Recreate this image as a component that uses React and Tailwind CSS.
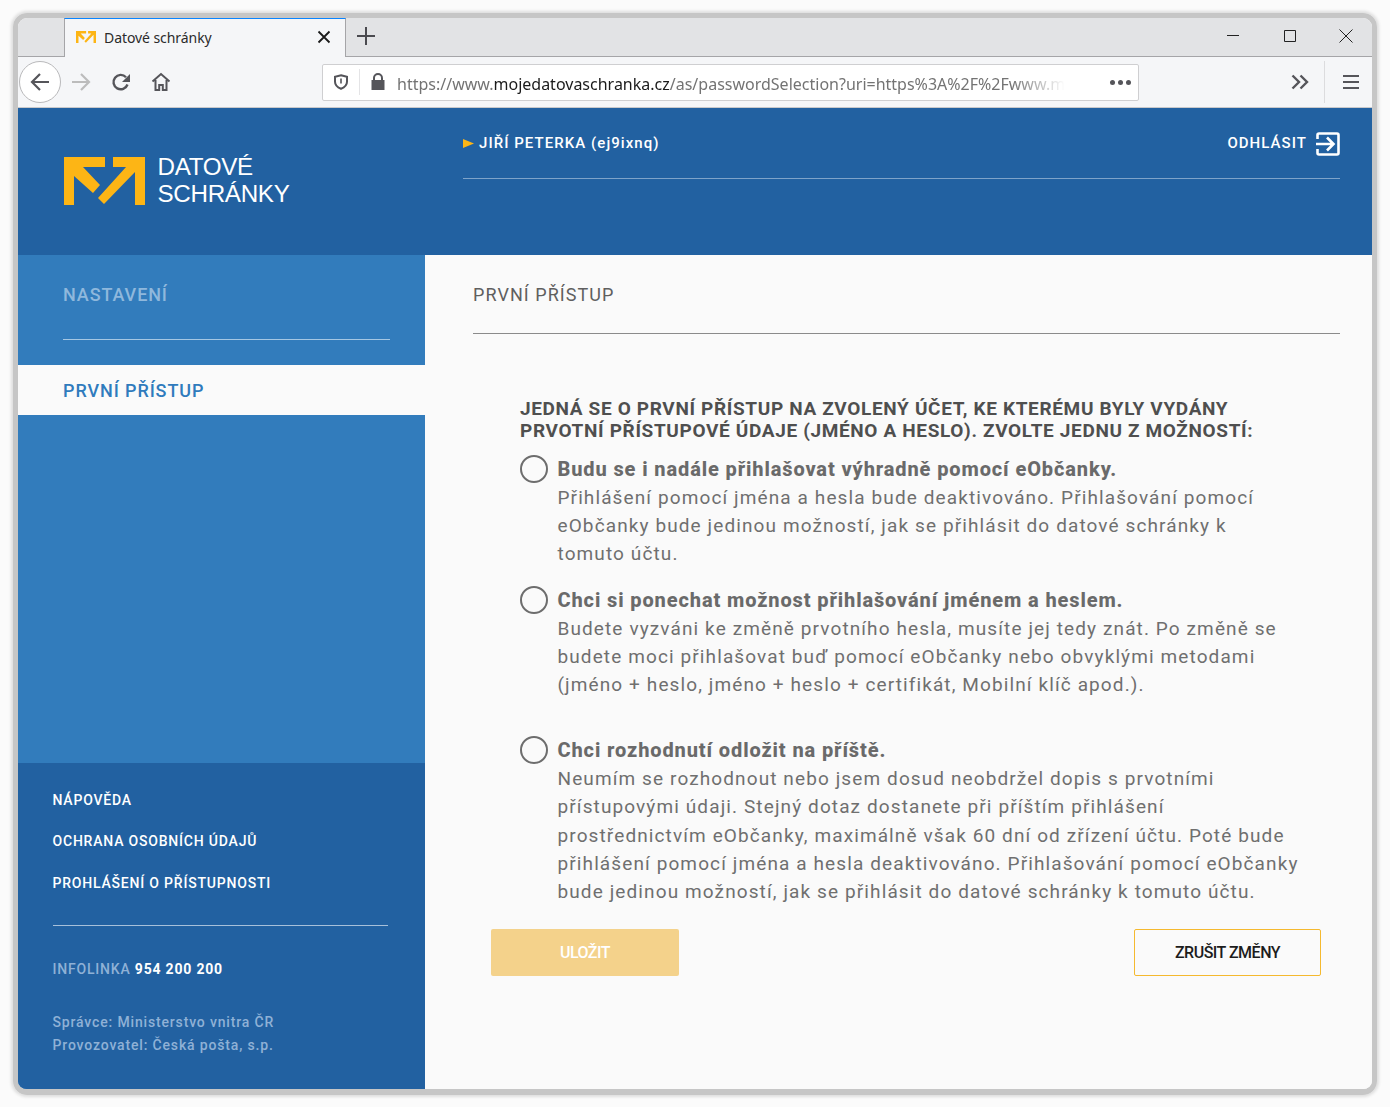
const Logo = ({ className }) => (
  <svg viewBox="0 0 81 48" className={className}>
    <path fill="#fdb515" d="M0 0H41V10H19L36 28L29 36L10 19V48H0Z" />
    <path fill="#fdb515" d="M49 0H81V48H71V15L40 47L34 41L62 10H49Z" />
  </svg>
);

const Option = ({ title, children, className = "" }) => (
  <div className={`flex ${className}`}>
    <div className="w-[28px] h-[28px] rounded-full border-2 border-[#6d6d6d] bg-[#fafafa] shrink-0" />
    <div className="ml-[10px] -translate-x-[0.5px]">
      <div className="text-[20px] leading-[29px] font-extrabold text-[#6a6a6a] tracking-[0.88px]">{title}</div>
      <div className="text-[19px] leading-[28.2px] text-[#6f6f6f] tracking-[1.11px]">{children}</div>
    </div>
  </div>
);

export default function App() {
  return (
    <div className="w-[1390px] h-[1107px] bg-[#fbfbfb] overflow-hidden pt-[13px] pl-[13px] font-['Roboto',sans-serif]">
      <div className="w-[1364px] h-[1082px] border-[5px] border-b-[6px] border-[#c6c6c6] rounded-[14px] overflow-hidden shadow-[0_0_3px_2px_#dedede] flex flex-col">
        {/* tab strip */}
        <div className="h-[39px] bg-[#e2e3e5] border-b border-[#a5a5a8] flex shrink-0">
          <div className="w-[46px]" />
          <div className="w-[282px] h-[39px] bg-[#f5f6f8] border-t border-t-[#0a84ff] border-x border-x-[#a5a5a8] flex items-center pl-[11px] pr-[14px] pb-[2px]">
            <Logo className="w-[20px] h-[12px] mr-[8px]" />
            <span className="text-[14px] text-[#2b2b2b] font-['Noto_Sans',sans-serif] tracking-[-0.07px]">Datové schránky</span>
            <svg viewBox="0 0 14 14" className="w-[14px] h-[14px] ml-auto" fill="none" stroke="#1a1a1a" strokeWidth="1.8"><path d="M1.500 1.500l11 11M12.500 1.500l-11 11" /></svg>
          </div>
          <div className="w-[40px] flex items-center justify-center pb-[2px]">
            <svg viewBox="0 0 18 18" className="w-[18px] h-[18px]" fill="none" stroke="#4a4a4f" strokeWidth="2"><path d="M9 0v18M0 9h18" /></svg>
          </div>
          <div className="ml-auto flex items-center text-[#222] pr-[19px] pb-[2px]">
            <svg viewBox="0 0 12 12" className="w-[12px] h-[12px]" fill="none" stroke="#222" strokeWidth="1"><path d="M0 5.500h12" /></svg>
            <svg viewBox="0 0 12 12" className="w-[12px] h-[12px] ml-[45px]" fill="none" stroke="#222" strokeWidth="1"><path d="M.5.5h11v11H.5z" /></svg>
            <svg viewBox="0 0 14 14" className="w-[14px] h-[14px] ml-[43px]" fill="none" stroke="#222" strokeWidth="1"><path d="M.5.5l13 13M13.500.5l-13 13" /></svg>
          </div>
        </div>
        {/* toolbar */}
        <div className="h-[51px] bg-[#f5f6f8] border-b border-[#c9c9cb] flex items-center shrink-0 relative">
          <div className="w-[42px] h-[42px] ml-[1px] rounded-full bg-white border border-[#b9b9bb] flex items-center justify-center">
            <svg viewBox="0 0 20 20" className="w-[20px] h-[20px]" fill="none" stroke="#55555a" strokeWidth="2.2"><path d="M19 10H2M10 2l-8 8 8 8" /></svg>
          </div>
          <svg viewBox="0 0 20 20" className="w-[20px] h-[20px] ml-[10px]" fill="none" stroke="#bcbcbc" strokeWidth="2.2"><path d="M1 10h17M10 2l8 8-8 8" /></svg>
          <svg viewBox="0 0 20 20" className="w-[20px] h-[20px] ml-[20px]" fill="none" stroke="#55555a" strokeWidth="2.4"><path d="M16.500 12.500A7.200 7.200 0 1 1 15 5.200" /><path fill="#55555a" stroke="none" d="M19 2v8h-8z" /></svg>
          <svg viewBox="0 0 20 20" className="w-[20px] h-[20px] ml-[20px]" fill="none" stroke="#55555a" strokeWidth="2"><path d="M1.500 9.500L10 2l8.500 7.500M4.500 8v10h3.700v-5h3.600v5h3.700V8" /></svg>
          <div className="w-[817px] h-[37px] ml-[151px] bg-white rounded-[2px] border border-[#cfcfd1] flex items-center pr-[6px] shrink-0">
            <svg viewBox="0 0 16 16" className="w-[16px] h-[16px] ml-[10px]" fill="none" stroke="#55555a" strokeWidth="2"><path d="M8 1.200l6 1.600v5c0 3.400-2.500 5.600-6 7-3.500-1.400-6-3.600-6-7v-5z" /><path d="M8 4.500v5" strokeWidth="1.6" /></svg>
            <div className="w-px h-[26px] bg-[#e4e4e6] ml-[10px]" />
            <svg viewBox="0 0 16 18" className="w-[16px] h-[18px] ml-[10px]" fill="#55555a"><path d="M3 7V5a5 5 0 0 1 10 0v2h1.500v10h-13V7zm2 0h6V5a3 3 0 0 0-6 0z" /></svg>
            <div className="ml-[11px] w-[668px] overflow-hidden whitespace-nowrap text-[16px] pt-[3px] text-[#737373] font-['Noto_Sans',sans-serif] [mask-image:linear-gradient(to_right,black_92%,transparent)]">
              https://www.<span className="text-[#1b1b1b]">mojedatovaschranka.cz</span>/as/passwordSelection?uri=https%3A%2F%2Fwww.m
            </div>
            <div className="ml-auto flex gap-[3px] mr-[1px]">
              <span className="w-[5px] h-[5px] rounded-full bg-[#55555a]" />
              <span className="w-[5px] h-[5px] rounded-full bg-[#55555a]" />
              <span className="w-[5px] h-[5px] rounded-full bg-[#55555a]" />
            </div>
          </div>
          <svg viewBox="0 0 18 16" className="w-[18px] h-[16px] ml-[152px]" fill="none" stroke="#55555a" strokeWidth="2.4"><path d="M1.500 1.500L8 8l-6.500 6.500M9.500 1.500L16 8l-6.500 6.500" /></svg>
          <div className="w-px h-[42px] bg-[#dcdcde] ml-[15px]" />
          <svg viewBox="0 0 16 16" className="w-[16px] h-[16px] ml-[18px]" fill="none" stroke="#55555a" strokeWidth="2"><path d="M0 2h16M0 8h16M0 14h16" /></svg>
        </div>
        {/* header */}
        <div className="h-[147px] bg-[#2261a1] flex shrink-0">
          <div className="w-[445px] pl-[46px] pt-[49px] flex shrink-0">
            <Logo className="w-[81px] h-[48px]" />
            <div className="ml-[12.500px] -mt-[3px] text-white text-[24.2px] leading-[26.5px] font-['Liberation_Sans',sans-serif] -tracking-[0.3px]">DATOVÉ<br />SCHRÁNKY</div>
          </div>
          <div className="w-[877px] h-[71px] border-b border-[#7ea3c9] flex items-center pt-[1px] text-white font-medium text-[15px] tracking-[1.05px]">
            <svg viewBox="0 0 11 9" className="w-[11px] h-[9px] mr-[5px]"><path fill="#fdb515" d="M0 0l11 4.500L0 9z" /></svg>
            <span>JIŘÍ PETERKA (ej9ixnq)</span>
            <span className="ml-auto">ODHLÁSIT</span>
            <svg viewBox="0 0 24 24" className="w-[24px] h-[24px] ml-[9px]" fill="none" stroke="#fff" strokeWidth="2.6"><path d="M1.500 7V3q0-1.500 1.500-1.500h18q1.500 0 1.500 1.500v18q0 1.500-1.500 1.500H3q-1.500 0-1.500-1.500V17" /><path d="M0 12h17M11 5.500l6.500 6.500-6.500 6.500" /></svg>
          </div>
        </div>
        {/* body */}
        <div className="flex flex-1 min-h-0">
          <div className="w-[407px] shrink-0 flex flex-col bg-[#327cbc]">
            <div className="h-[508px] shrink-0">
              <div className="ml-[45px] mr-[35px] h-[85px] border-b border-[#a5c7e3] pt-[28px] text-[18px] leading-[24px] font-medium tracking-[0.9px] text-[#8fb8dc]">NASTAVENÍ</div>
              <div className="mt-[25px] h-[50px] bg-[#fafafa] pl-[45px] flex items-center text-[18px] font-medium tracking-[0.9px] text-[#2f7bbd]">PRVNÍ PŘÍSTUP</div>
            </div>
            <div className="flex-1 bg-[#2261a1] px-[35px] pt-[28px]">
              <div className="h-[135px] border-b border-[#a7c0da] text-white text-[14px] font-medium tracking-[0.8px] w-[335px]">
                <div className="leading-[18px] -ml-[0.5px]">NÁPOVĚDA</div>
                <div className="leading-[18px] mt-[23px] -ml-[0.5px]">OCHRANA OSOBNÍCH ÚDAJŮ</div>
                <div className="leading-[18px] mt-[24px] -ml-[0.5px]">PROHLÁŠENÍ O PŘÍSTUPNOSTI</div>
              </div>
              <div className="mt-[34px] -ml-[0.5px] text-[14px] font-medium leading-[18px] tracking-[0.8px] text-[#8fb1d6]">INFOLINKA <span className="text-white font-bold">954 200 200</span></div>
              <div className="mt-[33px] -ml-[0.5px] text-[14px] font-medium leading-[23px] tracking-[0.84px] text-[#8fb1d6]">Správce: Ministerstvo vnitra ČR<br />Provozovatel: Česká pošta, s.p.</div>
            </div>
          </div>
          <div className="flex-1 bg-[#fafafa] pl-[48px] pr-[32px]">
            <div className="h-[79px] border-b border-[#8b8b8b] pt-[28px] text-[18px] leading-[24px] tracking-[1.05px] text-[#5f5f5f]">PRVNÍ PŘÍSTUP</div>
            <div className="pl-[47px] pt-[64px]">
              <div className="text-[19px] leading-[22px] font-bold text-[#4f4f4f] tracking-[0.65px]">JEDNÁ SE O PRVNÍ PŘÍSTUP NA ZVOLENÝ ÚČET, KE KTERÉMU BYLY VYDÁNY<br />PRVOTNÍ PŘÍSTUPOVÉ ÚDAJE (JMÉNO A HESLO). ZVOLTE JEDNU Z MOŽNOSTÍ:</div>
              <Option className="mt-[13px]" title="Budu se i nadále přihlašovat výhradně pomocí eObčanky.">
                Přihlášení pomocí jména a hesla bude deaktivováno. Přihlašování pomocí<br />eObčanky bude jedinou možností, jak se přihlásit do datové schránky k<br />tomuto účtu.
              </Option>
              <Option className="mt-[17px]" title="Chci si ponechat možnost přihlašování jménem a heslem.">
                Budete vyzváni ke změně prvotního hesla, musíte jej tedy znát. Po změně se<br />budete moci přihlašovat buď pomocí eObčanky nebo obvyklými metodami<br />(jméno + heslo, jméno + heslo + certifikát, Mobilní klíč apod.).
              </Option>
              <Option className="mt-[37px]" title="Chci rozhodnutí odložit na příště.">
                Neumím se rozhodnout nebo jsem dosud neobdržel dopis s prvotními<br />přístupovými údaji. Stejný dotaz dostanete při příštím přihlášení<br />prostřednictvím eObčanky, maximálně však 60 dní od zřízení účtu. Poté bude<br />přihlášení pomocí jména a hesla deaktivováno. Přihlašování pomocí eObčanky<br />bude jedinou možností, jak se přihlásit do datové schránky k tomuto účtu.
              </Option>
            </div>
            <div className="flex justify-between ml-[18px] mr-[19px] mt-[23px]">
              <div className="w-[188px] h-[47px] rounded-[2px] bg-[#f4d28b] flex items-center justify-center text-white text-[16px] font-medium tracking-[-0.5px]">ULOŽIT</div>
              <div className="w-[187px] h-[47px] rounded-[2px] border border-[#f5b92f] flex items-center justify-center text-[#1c1c1c] text-[16px] font-medium tracking-[-0.5px]">ZRUŠIT ZMĚNY</div>
            </div>
          </div>
        </div>
      </div>
    </div>
  );
}
